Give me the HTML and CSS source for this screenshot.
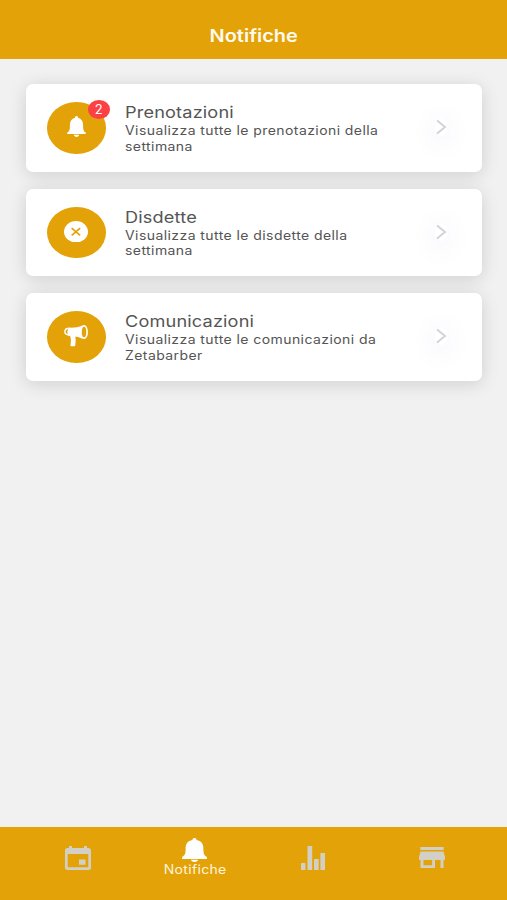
FILE: index.html
```html
<!DOCTYPE html>
<html lang="it">
<head>
	<meta charset="utf-8">
	<meta name="viewport" content="width=device-width, initial-scale=1">
	<title>Notifiche</title>
	<link rel="stylesheet" href="styles.css">
</head>
<body>

    <header>
        <h1>Notifiche</h1>
    </header>

    <main>
        <div class="card">
            <div class="icon">
                <svg class="bell" viewBox="0 0 24 24" preserveAspectRatio="none">
                    <path d="M12 0c-1.300 0-1.900.8-2 2-4 .9-6.300 4-6.300 8 0 5-.3 7.300-3.400 9v1.600h23.400V19c-3.100-1.700-3.400-4-3.400-9 0-4-2.300-7.100-6.300-8-.1-1.200-.7-2-2-2zM8.500 21.500C9 23 10.500 24 12 24s3-1 3.500-2.500z"/>
                </svg>
                <span class="badge">2</span>
            </div>
            <div class="text">
                <h2>Prenotazioni</h2>
                <p>Visualizza tutte le prenotazioni della<br>settimana</p>
            </div>
            <svg class="arrow" viewBox="0 0 12 18"><path d="M1.500 2l8.500 7-8.500 7"/></svg>
        </div>

        <div class="card">
            <div class="icon">
                <svg class="close" viewBox="0 0 24 21" preserveAspectRatio="none">
                    <ellipse cx="12" cy="10.500" rx="12" ry="10.500"/>
                    <path class="cross" d="M7.700 6.900l8.400 7.200M16.100 6.900l-8.400 7.200"/>
                </svg>
            </div>
            <div class="text">
                <h2>Disdette</h2>
                <p>Visualizza tutte le disdette della<br>settimana</p>
            </div>
            <svg class="arrow" viewBox="0 0 12 18"><path d="M1.500 2l8.500 7-8.500 7"/></svg>
        </div>

        <div class="card">
            <div class="icon">
                <svg class="megaphone" viewBox="0 0 24 21" preserveAspectRatio="none">
                    <path d="M4.500 2.500C9 3 14 2.300 18.500.5v13C15 11.800 12.800 11.300 11.500 11.200c-.3 2 .4 3 .2 4.500-.2 1.500-.4 2.800-.4 4.100 0 .7-.5.900-1.200.900H7.400c-.8 0-1-.5-.9-1.200.3-2 .9-5.500-.4-8.700L4 10.500 3.300 6.500z"/>
                    <path class="line" d="M4.300 3.500C1.500 3.300.9 5 .9 6.500s.9 3.200 3.400 3"/>
                    <ellipse class="horn" cx="20" cy="6.900" rx="3.100" ry="6"/>
                </svg>
            </div>
            <div class="text">
                <h2>Comunicazioni</h2>
                <p>Visualizza tutte le comunicazioni da<br>Zetabarber</p>
            </div>
            <svg class="arrow" viewBox="0 0 12 18"><path d="M1.500 2l8.500 7-8.500 7"/></svg>
        </div>
    </main>

    <nav>
        <a class="tab">
            <svg viewBox="0 0 26 24" preserveAspectRatio="none">
                <path fill-rule="evenodd" d="M4 0h3v2h12V0h3v2h1.500Q26 2 26 4.500v17Q26 24 23.500 24h-21Q0 24 0 21.500v-17Q0 2 2.500 2H4zM2.700 8v13.300h20.600V8zM14 13.500h6.500v5.300H14z"/>
            </svg>
        </a>
        <a class="tab active">
            <svg viewBox="0 0 24 24" preserveAspectRatio="none">
                <path d="M12 0c-1.300 0-1.900.8-2 2-4.500.9-6.500 4-6.500 8 0 5-.3 7.300-3.400 9v2h23.800v-2c-3.100-1.700-3.400-4-3.400-9 0-4-2-7.100-6.500-8-.1-1.200-.7-2-2-2zM8.500 21.700C9 23 10.500 24 12 24s3-1 3.500-2.300z"/>
            </svg>
            <span>Notifiche</span>
        </a>
        <a class="tab">
            <svg class="chart" viewBox="0 0 24 24" preserveAspectRatio="none">
                <rect x="0" y="17" width="4.400" height="7" rx=".6"/>
                <rect x="6.500" y="0" width="4.700" height="24" rx=".6"/>
                <rect x="13" y="13" width="4.700" height="11" rx=".6"/>
                <rect x="19.400" y="7" width="4.600" height="17" rx=".6"/>
            </svg>
        </a>
        <a class="tab">
            <svg class="store" viewBox="0 0 26 21" preserveAspectRatio="none">
                <path fill-rule="evenodd" d="M1.300 0h23.400v3H1.300zM1.500 4.500h23L26 10v3h-1.500v8h-3v-8h-5.500v8H1.500v-8H0v-3zM4.500 13v5.200h8.600V13z"/>
            </svg>
        </a>
    </nav>

</body>
</html>
```

FILE: styles.css
```css
* {
    box-sizing: border-box;
}

body {
    margin: 0;
    height: 900px;
    display: flex;
    flex-direction: column;
    background-color: #f1f1f1;
    font-family: Inter, Roboto, sans-serif;
}

h1, h2, p {
    margin: 0;
    font-weight: 400;
}

header {
    display: flex;
    justify-content: center;
    height: 59px;
    padding-top: 24px;
    padding-left: 1px;
    background-color: #e3a208;
}

h1 {
    color: #fffaf0;
    font-size: 17.500px;
    line-height: 24px;
    font-weight: 600;
    transform: scaleX(1.14);
}

main {
    flex: 1;
    padding: 25px 25px 0 26px;
}

.card {
    display: flex;
    height: 87.500px;
    margin-bottom: 17px;
    padding: 18px 35px 0 21px;
    background-color: #fff;
    border-radius: 7px;
    box-shadow: 0 3px 18px rgba(0, 0, 0, 0.14);
}

.icon {
    position: relative;
    display: flex;
    align-items: center;
    justify-content: center;
    width: 58.500px;
    height: 51.500px;
    margin-right: 19.500px;
    border-radius: 50%;
    background-color: #e3a208;
    fill: #fff;
}

.bell {
    width: 19px;
    height: 21px;
    margin-bottom: 2px;
}

.close, .megaphone {
    width: 24px;
    height: 21.500px;
    margin-bottom: 2px;
}

.cross {
    fill: none;
    stroke: #e3a208;
    stroke-width: 1.700;
}

.line {
    fill: none;
    stroke: #fff;
    stroke-width: 1.500;
}

.horn {
    fill: #e3a208;
    stroke: #fff;
    stroke-width: 1.700;
}

.badge {
    position: absolute;
    top: -2px;
    right: -4px;
    width: 21.500px;
    height: 18.500px;
    border-radius: 50%;
    background-color: #fc4144;
    color: #fff;
    font-size: 13px;
    line-height: 19px;
    text-align: center;
}

.text {
    color: #555;
    white-space: nowrap;
    transform: scaleX(1.12);
    transform-origin: left;
}

h2 {
    font-size: 16.200px;
    line-height: 21px;
    letter-spacing: 0.150px;
}

p {
    font-size: 12.500px;
    line-height: 15.500px;
    letter-spacing: 0.380px;
}

.arrow {
    width: 12px;
    height: 18px;
    margin-top: 16px;
    margin-left: auto;
    fill: none;
    stroke: #d5d2d5;
    stroke-width: 2;
    border-radius: 50%;
    box-shadow: 0 5px 18px 8px rgba(150, 110, 200, 0.05);
}

nav {
    display: flex;
    height: 73.500px;
    padding: 0 16px 0 19px;
    background-color: #e3a208;
}

.tab {
    flex: 1;
    display: flex;
    flex-direction: column;
    align-items: center;
    padding-top: 19.500px;
    fill: #d2cfc5;
}

.tab svg {
    width: 26px;
    height: 24px;
}

.tab .chart {
    width: 24px;
    margin-right: 4px;
}

.tab .store {
    height: 21px;
    margin-top: 1px;
}

.active {
    padding-top: 11.500px;
    padding-right: 3px;
    fill: #fff;
    color: #fff4dc;
}

.active svg {
    width: 25px;
}

.active span {
    font-size: 12.500px;
    line-height: 15px;
    letter-spacing: 0.300px;
    transform: scaleX(1.12);
}
```
